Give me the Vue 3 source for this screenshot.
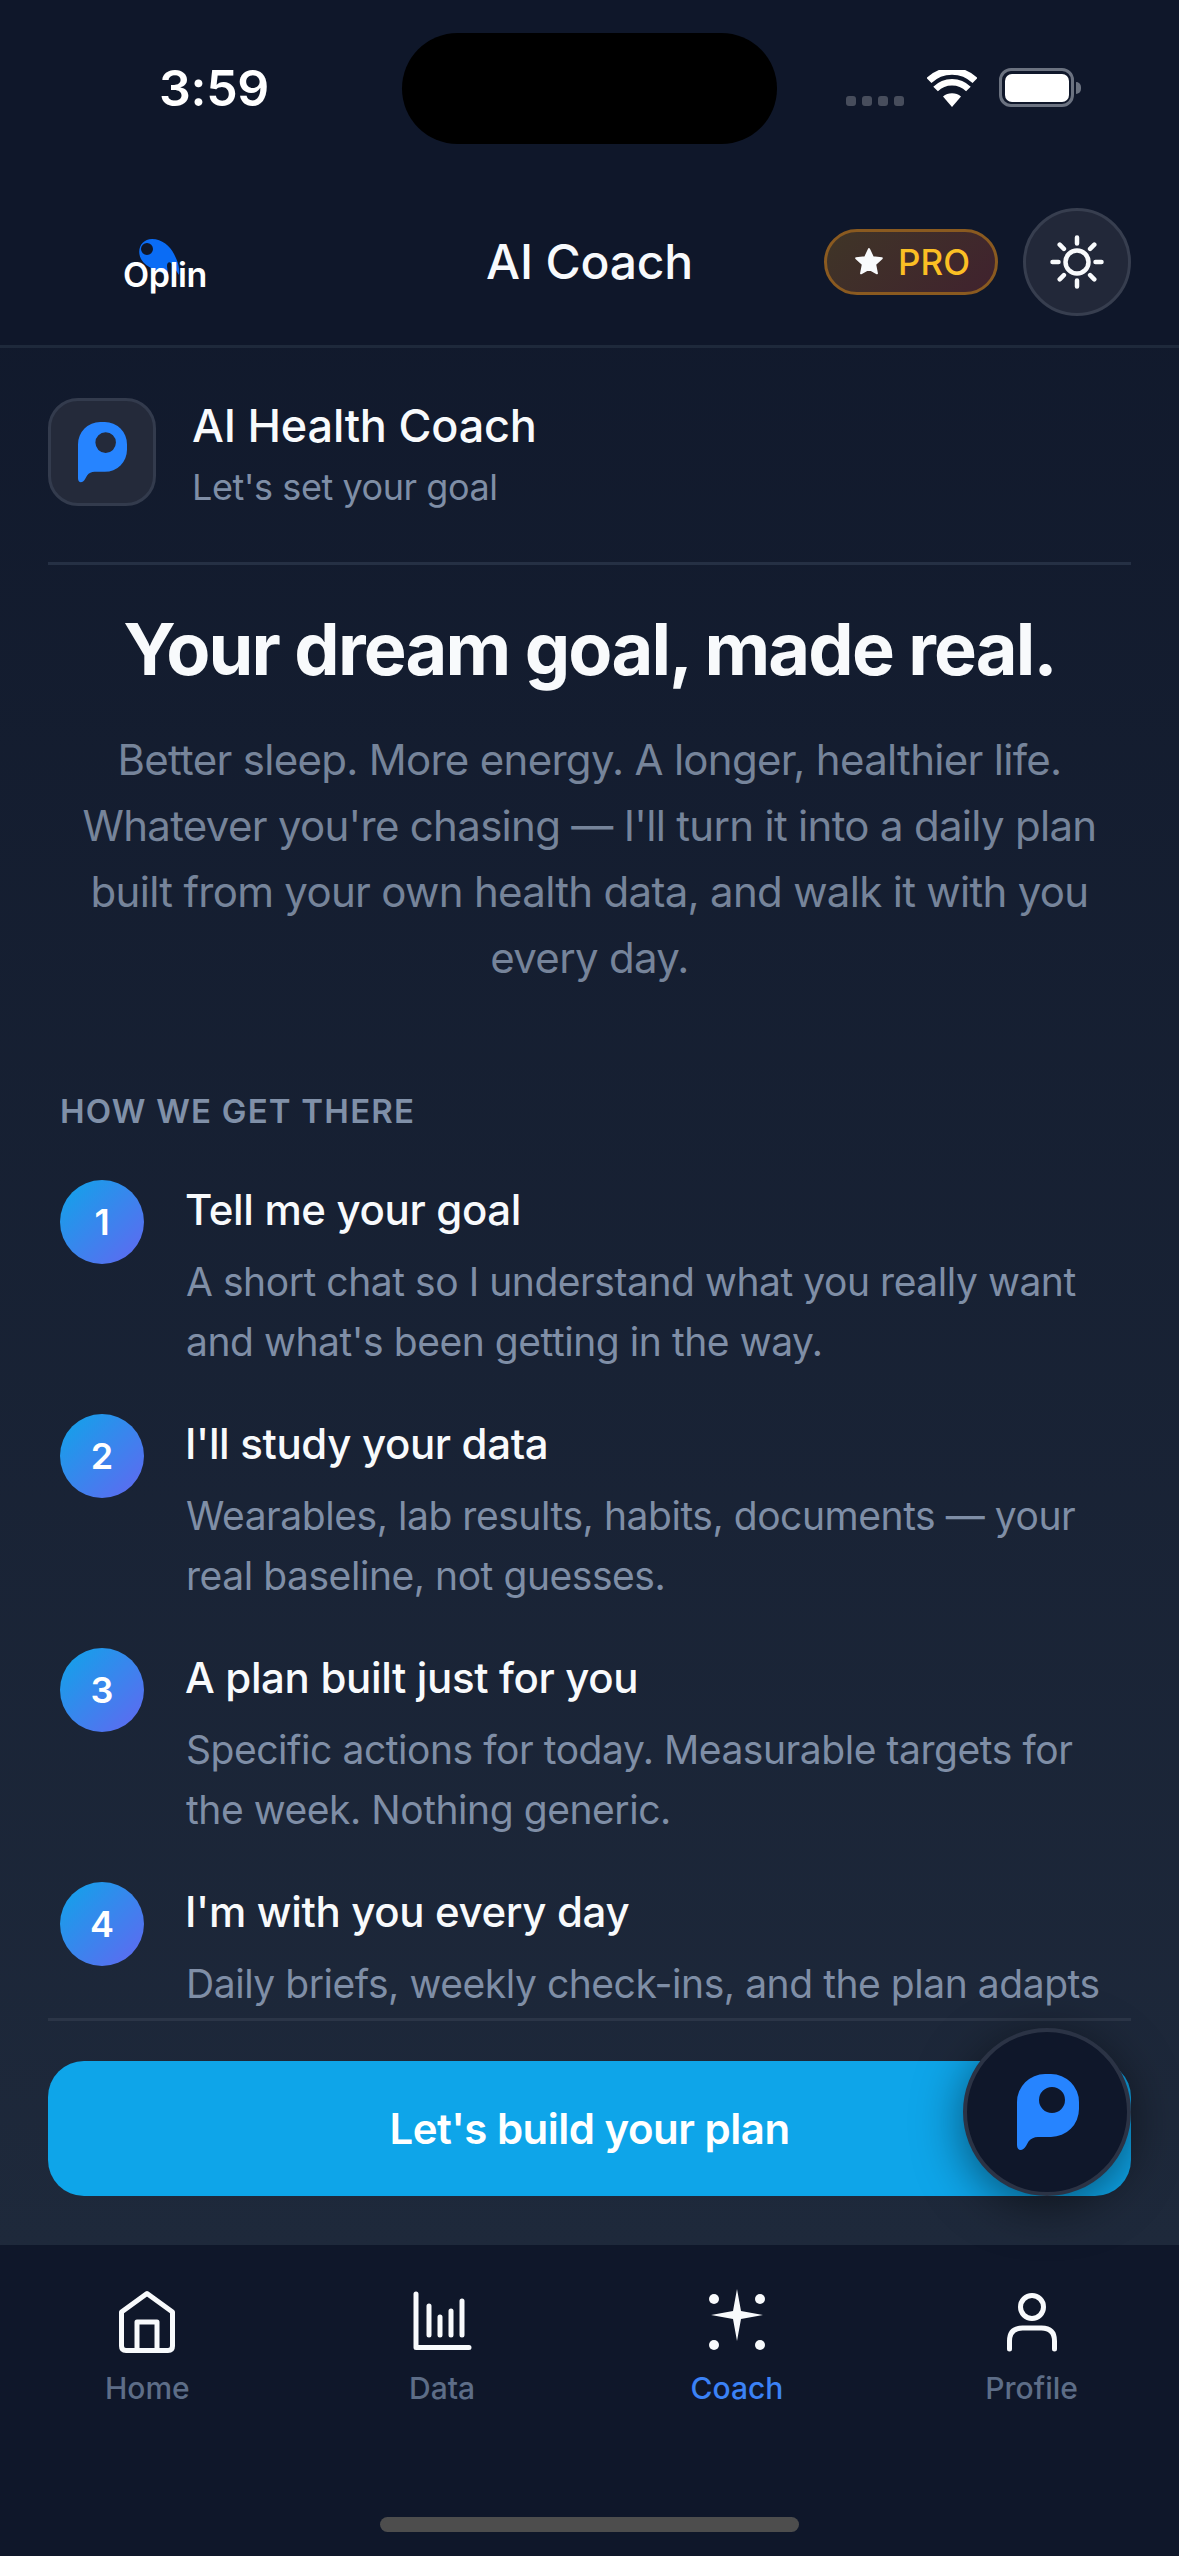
<template>
  <div class="screen">
    <div class="status">
      <span class="time">3:59</span>
      <div class="island"></div>
      <div class="status-right">
        <div class="signal"><i></i><i></i><i></i><i></i></div>
        <svg class="wifi" width="50" height="37" viewBox="0 0 50 37">
          <path d="M25 37 L16 26.5 A14 14 0 0 1 34 26.5 Z" fill="#fff" />
          <path d="M8.6 19 A23 23 0 0 1 41.4 19" fill="none" stroke="#fff" stroke-width="6.5" />
          <path d="M2 10.5 A33 33 0 0 1 48 10.5" fill="none" stroke="#fff" stroke-width="7" />
        </svg>
        <div class="battery"><div class="battery-fill"></div></div>
        <div class="battery-nub"></div>
      </div>
    </div>

    <header class="topbar">
      <div class="logo">
        <svg class="logo-mark" width="42" height="37" viewBox="0 0 42 37">
          <path fill-rule="evenodd" fill="#0a6cf5" d="M14 0 C24 0 32 7 36 15 C39 21 42 27 41 36 L33 24 C31 22 29 24 29 27 L30 36 C22 33 8 29 3 20 C-2 10 4 0 14 0 Z M3 10 A6 6 0 1 0 15 10 A6 6 0 1 0 3 10 Z" />
        </svg>
        <span class="logo-text">Oplin</span>
      </div>
      <h1 class="topbar-title">AI Coach</h1>
      <div class="topbar-actions">
        <div class="pro">
          <svg width="30" height="29" viewBox="0 0 24 23"><path fill="#f8fafc" stroke="#f8fafc" stroke-width="1.5" stroke-linejoin="round" d="M12 1.5 L15.1 8 L22.3 8.9 L17 13.8 L18.4 21 L12 17.4 L5.6 21 L7 13.8 L1.7 8.9 L8.9 8 Z" /></svg>
          <span>PRO</span>
        </div>
        <div class="theme-btn">
          <svg width="56" height="56" viewBox="0 0 56 56" fill="none" stroke="#f8fafc" stroke-width="4.5" stroke-linecap="round">
            <circle cx="28" cy="28" r="11.5" />
            <path d="M28 3.5v6M28 46.500v6M3.500 28h6M46.500 28h6M10.700 10.700l4.200 4.200M41.100 41.100l4.200 4.200M10.700 45.300l4.200-4.200M41.100 14.900l4.200-4.200" />
          </svg>
        </div>
      </div>
    </header>

    <main class="content">
      <div class="coach-row">
        <div class="coach-icon">
          <svg width="49" height="61" viewBox="0 0 62 77"><path fill="#2684ff" fill-rule="evenodd" :d="pMark" /></svg>
        </div>
        <div class="coach-text">
          <div class="coach-name">AI Health Coach</div>
          <div class="coach-sub">Let's set your goal</div>
        </div>
      </div>

      <section class="hero">
        <h2>Your dream goal, made real.</h2>
        <p>Better sleep. More energy. A longer, healthier life. Whatever you're chasing — I'll turn it into a daily plan built from your own health data, and walk it with you every day.</p>
      </section>

      <div class="steps-label">HOW WE GET THERE</div>
      <div class="steps">
        <div v-for="(step, i) in steps" :key="step.title" class="step">
          <div class="step-num">{{ i + 1 }}</div>
          <div>
            <div class="step-title">{{ step.title }}</div>
            <div class="step-desc">{{ step.desc }}</div>
          </div>
        </div>
      </div>
    </main>

    <div class="action">
      <button class="cta">Let's build your plan</button>
      <div class="fab">
        <svg width="62" height="77" viewBox="0 0 62 77"><path fill="#2684ff" fill-rule="evenodd" :d="pMark" /></svg>
      </div>
    </div>

    <nav class="tabs">
      <div v-for="tab in tabs" :key="tab.name" class="tab" :class="{ active: tab.name === 'Coach' }">
        <svg width="64" height="64" viewBox="0 0 64 64" fill="none" stroke="#f8fafc" stroke-width="5" stroke-linecap="round" stroke-linejoin="round">
          <template v-if="tab.name === 'Home'">
            <path d="M32 4.500 L57.500 23 V57 Q57.500 61.500 53 61.500 H11 Q6.500 61.500 6.500 57 V23 Z" />
            <path d="M22 61 V33 H42 V61" />
          </template>
          <template v-else-if="tab.name === 'Data'">
            <path d="M6 5 V58.500 H59" />
            <path d="M19 17 V46M30 28 V46M41 22 V46M52 12 V46" />
          </template>
          <template v-else-if="tab.name === 'Coach'">
            <path fill="#f8fafc" stroke="none" d="M32 0 L36 22 L58 26 L36 30 L32 52 L28 30 L6 26 L28 22 Z" />
            <g fill="#f8fafc" stroke="none">
              <circle cx="9" cy="10" r="5" /><circle cx="55" cy="10" r="5" />
              <circle cx="9" cy="56" r="5" /><circle cx="55" cy="56" r="5" />
            </g>
          </template>
          <template v-else>
            <circle cx="32" cy="18" r="11.500" />
            <path d="M9.500 60 V52 Q9.500 39 22.500 39 H41.500 Q54.500 39 54.500 52 V60" />
          </template>
        </svg>
        <span>{{ tab.name }}</span>
      </div>
    </nav>
    <div class="home-bar"></div>
  </div>
</template>

<script setup>
const pMark =
  "M0 28 A28 28 0 0 1 28 0 H34 A28 28 0 0 1 62 28 V35 A28 28 0 0 1 34 63 H21 C17 63 14 64.500 11.500 67.500 L9 72 C5.500 78 0 77 0 71 Z M22 26 A13 13 0 1 0 48 26 A13 13 0 1 0 22 26 Z";

const steps = [
  { title: "Tell me your goal", desc: "A short chat so I understand what you really want and what's been getting in the way." },
  { title: "I'll study your data", desc: "Wearables, lab results, habits, documents — your real baseline, not guesses." },
  { title: "A plan built just for you", desc: "Specific actions for today. Measurable targets for the week. Nothing generic." },
  { title: "I'm with you every day", desc: "Daily briefs, weekly check-ins, and the plan adapts" },
];

const tabs = [{ name: "Home" }, { name: "Data" }, { name: "Coach" }, { name: "Profile" }];
</script>

<style>
html, body { margin: 0; background: #0f172a; }
</style>

<style scoped>
.screen {
  position: relative;
  width: 1179px;
  height: 2556px;
  display: flex;
  flex-direction: column;
  overflow: hidden;
  background: linear-gradient(180deg, #0f172a 0, #1e293b 2245px);
  font-family: "Inter", "Liberation Sans", sans-serif;
  color: #f8fafc;
}

.status {
  height: 144px;
  flex-shrink: 0;
  display: flex;
  justify-content: space-between;
  background: #0f172a;
}
.time {
  margin: 58px 0 0 159px;
  font-size: 50px;
  line-height: 60px;
  font-weight: 600;
  color: #fff;
  letter-spacing: -0.3px;
}
.island {
  position: absolute;
  left: 402px;
  top: 33px;
  width: 375px;
  height: 111px;
  border-radius: 56px;
  background: #000;
}
.status-right {
  display: flex;
  align-items: flex-end;
  height: 107px;
  margin-right: 98px;
}
.signal { display: flex; gap: 6px; margin-right: 23px; }
.signal i { width: 10px; height: 10px; border-radius: 3px; background: #474d5c; margin-bottom: 1px; }
.wifi { margin-right: 22px; }
.battery {
  width: 75px;
  height: 39px;
  box-sizing: border-box;
  border: 3.5px solid #6b7280;
  border-radius: 12px;
  padding: 2.5px;
}
.battery-fill { width: 100%; height: 100%; background: #fff; border-radius: 7px; }
.battery-nub {
  width: 5px;
  height: 12px;
  margin: 0 0 13px 2px;
  background: #6b7280;
  border-radius: 0 6px 6px 0;
}

.topbar {
  height: 204px;
  flex-shrink: 0;
  box-sizing: border-box;
  display: grid;
  grid-template-columns: 1fr auto 1fr;
  align-items: center;
  padding: 34px 48px 0;
  background: #0f172a;
  border-bottom: 3px solid #1e293b;
}
.logo { position: relative; margin-left: 75px; width: 90px; padding-top: 26px; }
.logo-mark { position: absolute; left: 15px; top: 10px; }
.logo-text {
  position: relative;
  font-size: 34px;
  line-height: 40px;
  font-weight: 600;
  color: #fff;
  letter-spacing: -0.4px;
}
.topbar-title {
  margin: 0;
  font-size: 48px;
  line-height: 60px;
  font-weight: 500;
  letter-spacing: -0.2px;
}
.topbar-actions { display: flex; justify-content: flex-end; align-items: center; gap: 25px; }
.pro {
  width: 174px;
  height: 66px;
  box-sizing: border-box;
  display: flex;
  align-items: center;
  justify-content: center;
  gap: 14px;
  padding-left: 2px;
  border: 3px solid #8a5a20;
  border-radius: 33px;
  background: linear-gradient(135deg, #3f3527, #40222e);
  color: #fbbf24;
  font-size: 35px;
  font-weight: 500;
}
.theme-btn {
  width: 108px;
  height: 108px;
  box-sizing: border-box;
  display: flex;
  align-items: center;
  justify-content: center;
  border: 3px solid #373e4f;
  border-radius: 50%;
  background: #222839;
}

.content {
  flex: 1;
  min-height: 0;
  overflow: hidden;
  padding: 0 48px;
}
.coach-row {
  display: flex;
  align-items: center;
  gap: 36px;
  height: 217px;
  box-sizing: border-box;
  padding-bottom: 6px;
  border-bottom: 3px solid #253044;
}
.coach-text { padding-top: 3px; }
.coach-name { font-size: 45px; line-height: 56px; font-weight: 500; letter-spacing: -0.2px; }
.coach-sub { margin-top: 11px; font-size: 36px; line-height: 44px; color: #7f8ea6; letter-spacing: -0.45px; }
.coach-icon {
  width: 108px;
  height: 108px;
  box-sizing: border-box;
  display: flex;
  align-items: center;
  justify-content: center;
  border: 3px solid #333b4d;
  border-radius: 30px;
  background: #242a3a;
}

.hero { text-align: center; padding-top: 37px; }
.hero h2 {
  margin: 0;
  font-size: 72px;
  line-height: 94px;
  font-weight: 700;
  letter-spacing: -1.8px;
}
.hero p {
  margin: 31px 0 0;
  padding: 0 20px;
  font-size: 42px;
  line-height: 66px;
  color: #76849a;
  letter-spacing: -0.7px;
}

.steps-label {
  margin: 100px 0 0 12px;
  font-size: 33px;
  line-height: 40px;
  font-weight: 600;
  color: #8090a8;
  letter-spacing: 1.2px;
}
.steps { margin: 49px 0 0 12px; display: flex; flex-direction: column; gap: 42px; }
.step { display: flex; gap: 42px; min-height: 192px; }
.step-num {
  width: 84px;
  height: 84px;
  flex-shrink: 0;
  display: flex;
  align-items: center;
  justify-content: center;
  border-radius: 50%;
  background: linear-gradient(135deg, #0ea5e9, #6366f1);
  font-size: 36px;
  font-weight: 600;
  color: #fff;
}
.step-title { font-size: 42px; line-height: 60px; font-weight: 550; letter-spacing: -0.35px; margin-left: -1px; }
.step-desc { margin-top: 12px; font-size: 39px; line-height: 60px; color: #7f8ea6; letter-spacing: -0.45px; }

.action {
  position: relative;
  flex-shrink: 0;
  margin: 0 48px;
  height: 227px;
  box-sizing: border-box;
  padding-top: 40px;
  border-top: 3px solid #2b3547;
}
.cta {
  display: block;
  width: 100%;
  height: 135px;
  padding: 0;
  border: 0;
  border-radius: 36px;
  background: #0ea5e9;
  color: #fff;
  font-family: inherit;
  font-size: 42px;
  font-weight: 600;
  letter-spacing: -0.5px;
}
.fab {
  position: absolute;
  right: 0;
  top: 7px;
  width: 168px;
  height: 168px;
  box-sizing: border-box;
  display: flex;
  align-items: center;
  justify-content: center;
  padding-left: 2px;
  border: 4px solid #2b3345;
  border-radius: 50%;
  background: #0f172a;
  box-shadow: 0 10px 48px rgba(0, 0, 0, 0.5);
}

.tabs {
  height: 311px;
  flex-shrink: 0;
  box-sizing: border-box;
  display: grid;
  grid-template-columns: repeat(4, 1fr);
  padding-top: 44px;
  background: #0f172a;
}
.tab {
  display: flex;
  flex-direction: column;
  align-items: center;
  font-size: 30px;
  line-height: 38px;
  font-weight: 500;
  color: #5d6d87;
}
.tab span { margin-top: 16px; }
.tab.active { color: #3b82f6; }

.home-bar {
  position: absolute;
  left: 380px;
  bottom: 24px;
  width: 419px;
  height: 15px;
  border-radius: 8px;
  background: #4d4d4d;
}
</style>
